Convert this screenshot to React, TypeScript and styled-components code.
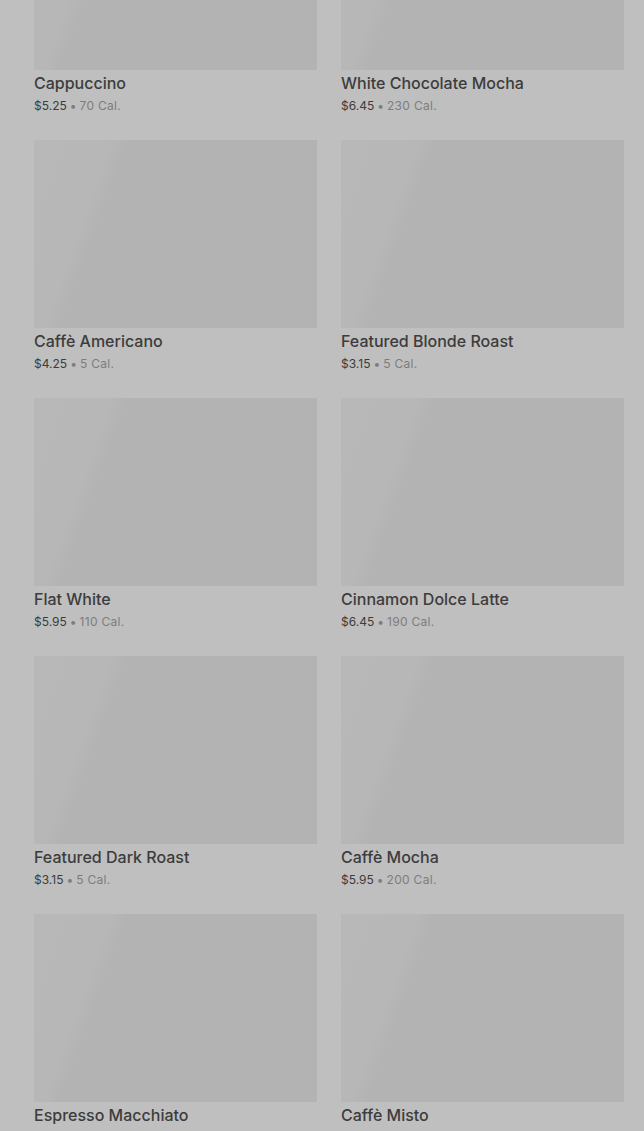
import React from 'react';
import styled, { createGlobalStyle } from 'styled-components';

const GlobalStyle = createGlobalStyle`
  html, body {
    margin: 0;
    padding: 0;
    background: #bfbfbf;
    overflow: hidden;
  }
  body {
    font-family: Inter, "Noto Sans", "Liberation Sans", sans-serif;
    -webkit-font-smoothing: antialiased;
  }
`;

const Page = styled.div`
  width: 644px;
  height: 1131px;
  overflow: hidden;
  background: #bfbfbf;
`;

// list is scrolled: first row's image is partly above the fold
const Grid = styled.div`
  display: grid;
  grid-template-columns: 283px 283px;
  column-gap: 24px;
  row-gap: 24px;
  padding: 0 20px 0 34px;
  margin-top: -118px;
`;

const Card = styled.div`
  display: flex;
  flex-direction: column;
`;

const Thumb = styled.div`
  height: 188px;
  background: linear-gradient(
    110deg,
    #b8b8b8 0%,
    #b7b7b7 22%,
    #b3b3b3 27%,
    #b3b3b3 100%
  );
`;

const Title = styled.div`
  margin-top: 2px;
  font-size: 16px;
  line-height: 22px;
  font-weight: 500;
  color: #3c3c3c;
  white-space: nowrap;
`;

const Meta = styled.div`
  margin-top: 2px;
  font-size: 12px;
  line-height: 20px;
  color: #3c3c3c;
  white-space: nowrap;
`;

const Cal = styled.span`
  color: #7d7d7d;
  letter-spacing: 0.3px;
`;

const Dot = styled.span`
  color: #7d7d7d;
  margin: 0 3px;
`;

const items = [
  { name: 'Cappuccino', price: '$5.25', cal: '70 Cal.' },
  { name: 'White Chocolate Mocha', price: '$6.45', cal: '230 Cal.' },
  { name: 'Caffè Americano', price: '$4.25', cal: '5 Cal.' },
  { name: 'Featured Blonde Roast', price: '$3.15', cal: '5 Cal.' },
  { name: 'Flat White', price: '$5.95', cal: '110 Cal.' },
  { name: 'Cinnamon Dolce Latte', price: '$6.45', cal: '190 Cal.' },
  { name: 'Featured Dark Roast', price: '$3.15', cal: '5 Cal.' },
  { name: 'Caffè Mocha', price: '$5.95', cal: '200 Cal.' },
  { name: 'Espresso Macchiato', price: '$3.25', cal: '15 Cal.' },
  { name: 'Caffè Misto', price: '$4.45', cal: '110 Cal.' },
];

export default function App() {
  return (
    <>
      <GlobalStyle />
      <Page>
        <Grid>
          {items.map(item => (
            <Card key={item.name}>
              <Thumb />
              <Title>{item.name}</Title>
              <Meta>
                {item.price}
                <Dot>•</Dot>
                <Cal>{item.cal}</Cal>
              </Meta>
            </Card>
          ))}
        </Grid>
      </Page>
    </>
  );
}
